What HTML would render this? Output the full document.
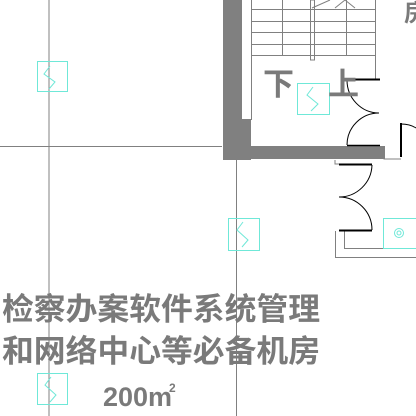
<!DOCTYPE html>
<html><head><style>
html,body{margin:0;padding:0;background:#fff;width:416px;height:416px;overflow:hidden}
svg{display:block}
text{font-family:"Liberation Sans","Noto Sans CJK SC",sans-serif;fill:#7a7a7a;font-weight:bold}
</style></head><body>
<svg width="416" height="416" viewBox="0 0 416 416">
<g stroke="#808080" stroke-width="1" fill="none">
<line x1="49" y1="0" x2="49" y2="416"/>
<line x1="0" y1="146.5" x2="222" y2="146.5"/>
<line x1="236.5" y1="160" x2="236.5" y2="416"/>
<line x1="251" y1="9.5" x2="375" y2="9.5"/>
<line x1="251" y1="21.5" x2="375" y2="21.5"/>
<line x1="251" y1="32.5" x2="375" y2="32.5"/>
<line x1="251" y1="44.5" x2="375" y2="44.5"/>
<line x1="251" y1="55.5" x2="375" y2="55.5"/>
<line x1="251.5" y1="0" x2="251.5" y2="120"/>
<line x1="282.5" y1="0" x2="282.5" y2="55"/>
<rect x="310.5" y="0" width="4" height="60"/>
<line x1="346.5" y1="0" x2="346.5" y2="55"/>
<line x1="375.5" y1="0" x2="375.5" y2="79"/>
<path d="M312 8 L330 0 M335 8 L345 0 L355 8"/>
<path d="M384 146 V159 H401 M335 160 V164 H345"/>
<path d="M335.5 231 V257.5 H416 M344.5 231 V248.5 H383"/>
</g>
<rect x="223" y="0" width="19" height="160" fill="#808080"/>
<rect x="223" y="119" width="28" height="41" fill="#808080"/>
<rect x="223" y="146" width="162" height="13" fill="#808080"/>
<g stroke="#000" fill="none">
<line x1="347" y1="79.5" x2="380" y2="79.5" stroke-width="2"/>
<path d="M347 80 A32 33 0 0 0 379 113" stroke-width="1"/>
<line x1="347" y1="145.5" x2="380" y2="145.5" stroke-width="1.5"/>
<path d="M347 145 A32 32 0 0 1 379 113" stroke-width="1"/>
<line x1="401" y1="123" x2="401" y2="157" stroke-width="2"/>
<path d="M401 124 Q410 124 416 128" stroke-width="1"/>
<line x1="339" y1="164.5" x2="372" y2="164.5" stroke-width="2"/>
<path d="M372 165 A33 33 0 0 1 339 197 A33 33 0 0 1 372 230" stroke-width="1"/>
<line x1="339" y1="230.5" x2="372" y2="230.5" stroke-width="2"/>
</g>
<g stroke="#6fe8d8" fill="none" stroke-width="1">
<rect x="37.5" y="61.5" width="30" height="30"/>
<path d="M50 66 L44 74 L55 82 L49 89"/>
<rect x="297.5" y="83.5" width="32" height="31"/>
<path d="M313 87 L307 95 L318 104 L311 111"/>
<rect x="228.5" y="218.5" width="31" height="32"/>
<path d="M243 222 L237 230 L248 240 L242 247"/>
<rect x="383.5" y="218.5" width="34" height="30"/>
<circle cx="399" cy="233" r="4.5"/><circle cx="399" cy="233" r="2"/>
<rect x="37.5" y="373.5" width="30" height="31"/>
<path d="M51 377 L45 385 L56 395 L50 402"/>
</g>
<text x="263" y="95" font-size="31" font-weight="normal">下</text>
<text x="328" y="95" font-size="31" font-weight="normal">上</text>
<text x="404" y="21" font-size="24" font-weight="normal">房</text>
<text x="2" y="320" font-size="31" textLength="318" lengthAdjust="spacingAndGlyphs">检察办案软件系统管理</text>
<text x="2" y="362" font-size="31" textLength="318" lengthAdjust="spacingAndGlyphs">和网络中心等必备机房</text>
<text x="103" y="406" font-size="27" font-weight="normal">200m</text>
<text x="169" y="392" font-size="12" font-weight="normal">2</text>
</svg>
</body></html>
